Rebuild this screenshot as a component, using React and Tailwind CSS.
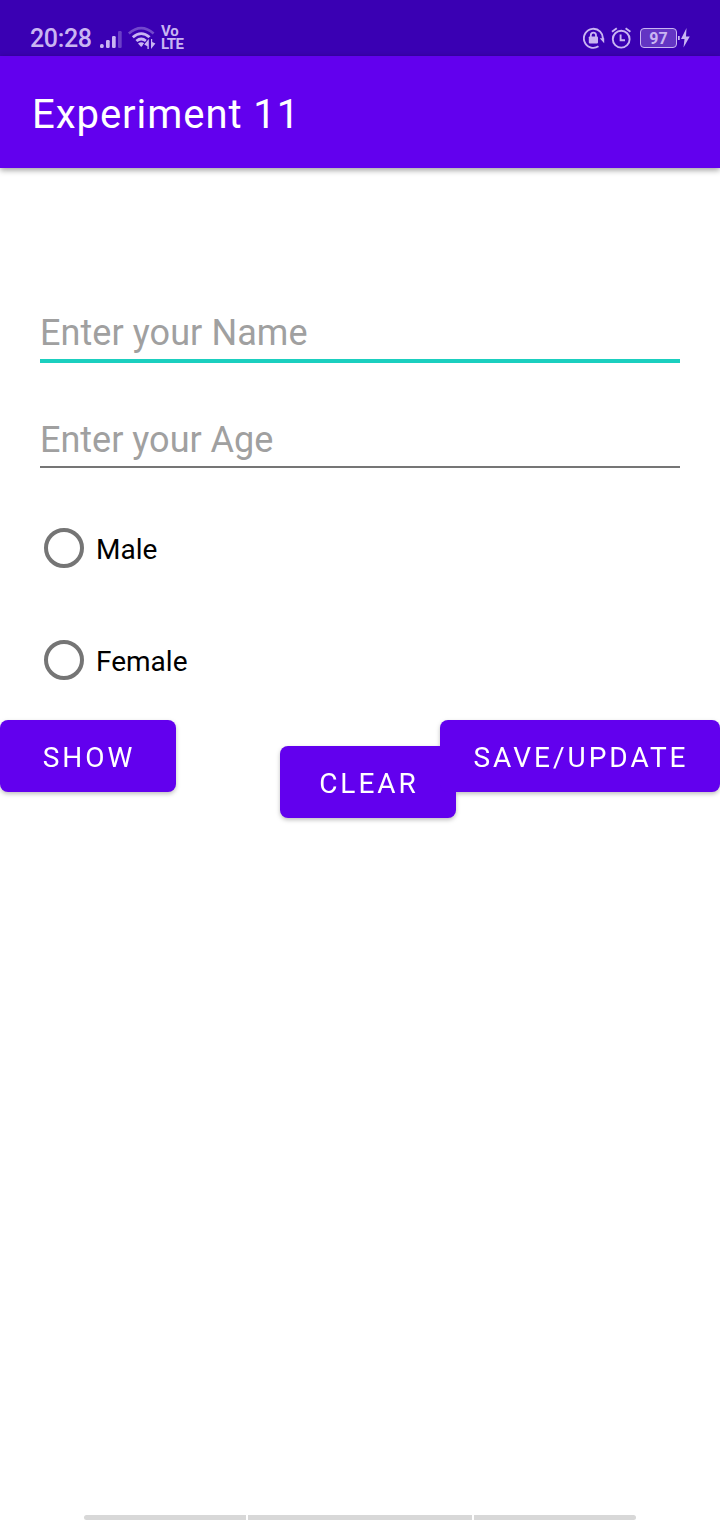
function SignalIcon() {
  return (
    <svg className="h-[20px] w-[24px]" viewBox="0 0 24 20" fill="#c9b5f2">
      <rect x="0" y="14" width="3.7" height="4" rx="1.6" />
      <rect x="6" y="10" width="3.7" height="8" rx="1.2" />
      <rect x="12" y="6" width="3.7" height="12" rx="1.2" />
      <rect x="18" y="1" width="3.7" height="17" rx="1.2" opacity="0.35" />
    </svg>
  );
}

function WifiIcon() {
  return (
    <svg className="h-[24px] w-[28px]" viewBox="0 0 28 24" fill="none" stroke="#c9b5f2">
      <path d="M0.8 7.5Q13.2 -3.2 25.6 7.5" strokeWidth="2.6" opacity="0.4" />
      <path d="M4.8 11.2Q13.2 4 21.6 11.2" strokeWidth="2.8" />
      <path d="M8.4 15Q13.2 11 18 15" strokeWidth="2.8" />
      <path d="M13.2 21L10 17.6Q13.2 15 16.4 17.6Z" fill="#c9b5f2" stroke="none" />
      <path d="M20.8 13V23H19.4V20.2L16.2 18.6ZM23 23V13H24.2V16L27.4 17.6Z" fill="#c9b5f2" stroke="#3a00b3" strokeWidth="1.6" paintOrder="stroke" />
    </svg>
  );
}

function RotationLockIcon() {
  return (
    <svg className="h-[22px] w-[22px]" viewBox="0 0 22 22" fill="none" stroke="#c9b5f2" strokeWidth="1.9">
      <path d="M15.5 19.3A9.5 9.5 0 1 1 19.8 12.5" />
      <path d="M16.8 11.2H21.2V16.2Z" fill="#c9b5f2" stroke="none" />
      <rect x="5.8" y="9.4" width="9.2" height="7" rx="0.8" fill="#c9b5f2" stroke="none" />
      <path d="M7.8 10V8.2A2.6 2.6 0 0 1 13 8.2V10" strokeWidth="1.8" />
    </svg>
  );
}

function AlarmIcon() {
  return (
    <svg className="h-[22px] w-[20px]" viewBox="0 0 20 22" fill="none" stroke="#c9b5f2" strokeWidth="1.9">
      <circle cx="10.2" cy="12.2" r="8.4" />
      <path d="M1 4.7L5.8 1.2M14.6 1.2L19.4 4.7" />
      <path d="M9.6 7.4V13.2H14" />
    </svg>
  );
}

function StatusBar() {
  return (
    <div className="flex h-[56px] items-start bg-[#3a00b3] text-[#c9b5f2]">
      <span className="mt-[23px] ml-[30px] w-[70px] text-[25px] leading-[32px] font-medium tracking-[-0.35px]">20:28</span>
      <div className="mt-[30px]"><SignalIcon /></div>
      <div className="mt-[26px] ml-[4px]"><WifiIcon /></div>
      <div className="mt-[25px] ml-[5px] flex flex-col text-[15px] leading-[12px] font-bold">
        <span className="tracking-[-0.3px]">Vo</span>
        <span className="mt-px tracking-[-0.6px]">LTE</span>
      </div>
      <div className="mt-[27px] mr-[30px] ml-auto flex items-start">
        <RotationLockIcon />
        <div className="ml-[6px]"><AlarmIcon /></div>
        <div className="mt-px ml-[9px] flex h-[20px] w-[37px] items-center justify-center rounded-[4px] border border-[#c9b5f2] bg-[#6335c3] pt-[2px] text-[16px] leading-[18px] font-bold">97</div>
        <svg className="h-[22px] w-[13px]" viewBox="0 0 13 22" fill="#c9b5f2">
          <rect x="1" y="9" width="1.7" height="4" />
          <path d="M9.5 1L4 12H7.5L6.5 20.5L12.8 9.5H9Z" />
        </svg>
      </div>
    </div>
  );
}

function Radio({ label }) {
  return (
    <label className="flex h-[112px] items-center">
      <span className="h-[40px] w-[40px] rounded-full border-4 border-[#757575]" />
      <span className="mt-[3px] ml-[12px] text-[28px] leading-[34px] text-black">{label}</span>
    </label>
  );
}

const buttonClass = "flex h-[72px] items-center justify-center rounded-[8px] bg-[#6200ee] pt-[4px] pl-[2px] text-[28px] leading-[34px] tracking-[3px] text-white";

export default function App() {
  return (
    <div className="flex h-[1520px] w-[720px] flex-col overflow-hidden bg-white font-[Roboto,sans-serif]">
      <StatusBar />
      <header className="flex h-[112px] shrink-0 items-center bg-[#6200ee] pt-[6px] pl-[32px] text-[40px] tracking-[0.95px] text-white shadow-[0_2px_6px_rgba(0,0,0,0.4)]">
        <h1>Experiment 11</h1>
      </header>
      <main className="flex flex-1 flex-col">
        <div className="mx-[40px] mt-[132px] flex h-[63px] items-end border-b-4 border-[#1bcfbf] pb-[4px] text-[36px] leading-[44px] tracking-[0.07px] text-[#a0a0a0]">Enter your Name</div>
        <div className="mx-[40px] mt-[45px] flex h-[60px] items-end border-b-2 border-[#757575] pb-[4px] text-[36px] leading-[44px] text-[#a0a0a0]">Enter your Age</div>
        <div className="mt-[24px] ml-[44px] flex flex-col">
          <Radio label="Male" />
          <Radio label="Female" />
        </div>
        <div className="mt-[4px] flex items-start drop-shadow-[0_2px_2px_rgba(0,0,0,0.25)]">
          <button className={`${buttonClass} w-[176px]`}>SHOW</button>
          <button className={`${buttonClass} mt-[26px] ml-[104px] w-[176px]`}>CLEAR</button>
          <button className={`${buttonClass} ml-[-16px] w-[280px]`}>SAVE/UPDATE</button>
        </div>
      </main>
      <div className="flex h-[5px] justify-center gap-[2px]">
        <div className="w-[162px] rounded-l-full bg-[#d8d8d8]" />
        <div className="w-[224px] bg-[#d8d8d8]" />
        <div className="w-[162px] rounded-r-full bg-[#d8d8d8]" />
      </div>
    </div>
  );
}
